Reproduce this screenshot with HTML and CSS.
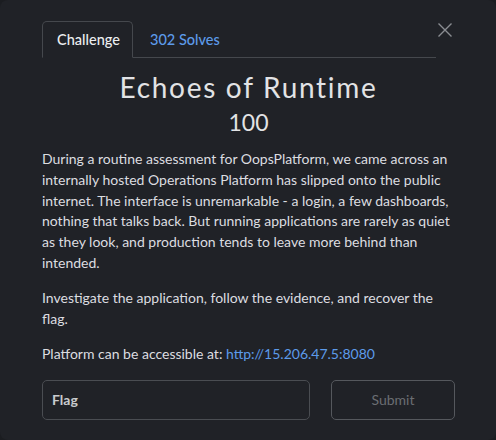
FILE: index.html
```html
<!DOCTYPE html>
<html lang="en">
<head>
    <meta charset="UTF-8">
    <meta name="viewport" content="width=device-width, initial-scale=1.0">
    <title>Echoes of Runtime</title>
    <link rel="stylesheet" href="styles.css">
</head>
<body>
    <div class="modal">
        <div class="modal-head">
            <ul class="nav-tabs">
                <li class="tab active">Challenge</li>
                <li class="tab">302 Solves</li>
            </ul>
            <button class="close" aria-label="Close">
                <svg width="16" height="16" viewBox="0 0 16 16">
                    <path d="M1.5 1.5L14.5 14.5M14.5 1.5L1.5 14.5" stroke="#8a8d92" stroke-width="1.4" fill="none"/>
                </svg>
            </button>
        </div>

        <h2 class="challenge-name">Echoes of Runtime</h2>
        <h3 class="challenge-value">100</h3>

        <div class="challenge-desc">
            <p>During a routine assessment for OopsPlatform, we came across an internally hosted Operations Platform has slipped onto the public internet. The interface is unremarkable - a login, a few dashboards, nothing that talks back. But running applications are rarely as quiet as they look, and production tends to leave more behind than intended.</p>
            <p>Investigate the application, follow the evidence, and recover the flag.</p>
            <p>Platform can be accessible at: <a href="#">http://15.206.47.5:8080</a></p>
        </div>

        <form class="flag-form">
            <input type="text" placeholder="Flag">
            <button type="submit" class="submit">Submit</button>
        </form>
    </div>
</body>
</html>
```

FILE: styles.css
```css
* {
    margin: 0;
    padding: 0;
    box-sizing: border-box;
}
body {
    background: #1b1d21;
    font-family: Lato, "Open Sans", sans-serif;
    color: #dcdde0;
}
.modal {
    width: 496px;
    height: 440px;
    background: #202227;
    border-radius: 8px;
    padding: 21px 41px 0 42px;
}
.modal-head {
    display: flex;
    align-items: flex-start;
}
.nav-tabs {
    list-style: none;
    display: flex;
    flex: 1;
    border-bottom: 1px solid #45484d;
    height: 37px;
}
.tab {
    font-size: 14.5px;
    font-weight: 500;
    padding: 0 16px;
    line-height: 36px;
    color: #5d9bea;
    border: 1px solid transparent;
    border-radius: 5px 5px 0 0;
    margin-bottom: -1px;
}
.tab.active {
    color: #eceef0;
    background: #202227;
    border-color: #45484d;
    border-bottom-color: #202227;
    padding: 0 14px;
    width: 91px;
}
.close {
    background: none;
    border: none;
    margin: 1px 2px 0 0;
    padding: 0;
    width: 17px;
    height: 16px;
    cursor: pointer;
}
.challenge-name {
    font-size: 28px;
    font-weight: normal;
    letter-spacing: 1.7px;
    text-align: center;
    margin-top: 11px;
    line-height: 36px;
    color: #e2e3e5;
}
.challenge-value {
    font-size: 23px;
    font-weight: normal;
    text-align: center;
    line-height: 30px;
    margin-top: 2px;
    color: #e2e3e5;
}
.challenge-desc {
    margin-top: 12px;
    font-size: 14px;
    line-height: 20.8px;
    width: 416px;
}
.challenge-desc p {
    margin-bottom: 14.5px;
}
.challenge-desc a {
    color: #5d9bea;
    text-decoration: none;
}
.flag-form {
    display: flex;
    gap: 21px;
    margin-top: 12px;
}
.flag-form input {
    width: 268px;
    height: 40px;
    background: #202227;
    border: 1px solid #4a4d52;
    border-radius: 5px;
    padding: 0 9px;
    font-family: Lato, sans-serif;
    font-size: 14px;
    color: #dcdde0;
}
.flag-form input::placeholder {
    color: #c9cbce;
    font-weight: bold;
}
.submit {
    width: 124px;
    height: 40px;
    background: transparent;
    border: 1px solid #55585d;
    border-radius: 5px;
    font-family: Lato, sans-serif;
    font-size: 14px;
    color: #6b6e73;
}
```
